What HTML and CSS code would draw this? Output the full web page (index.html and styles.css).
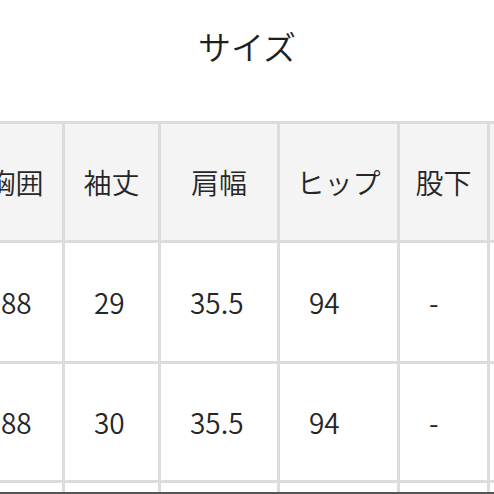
FILE: index.html
```html
<!DOCTYPE html>
<html lang="ja">
<head>
<meta charset="utf-8">
<link rel="stylesheet" href="styles.css">
</head>
<body>
<div class="page">
  <h2 class="title">サイズ</h2>
  <div class="table-wrap">
    <table class="size-table">
      <colgroup>
        <col class="c1"><col class="c2"><col class="c3"><col class="c4"><col class="c5"><col class="c6">
      </colgroup>
      <thead>
        <tr class="head-row">
          <th>胸囲</th><th>袖丈</th><th>肩幅</th><th>ヒップ</th><th>股下</th><th></th>
        </tr>
      </thead>
      <tbody>
        <tr class="row-a"><td class="first">88</td><td>29</td><td>35.5</td><td>94</td><td>-</td><td></td></tr>
        <tr class="row-b"><td class="first">88</td><td>30</td><td>35.5</td><td>94</td><td>-</td><td></td></tr>
        <tr class="row-c"><td class="first">88</td><td>31</td><td>35.5</td><td>94</td><td>-</td><td></td></tr>
      </tbody>
    </table>
  </div>
  <div class="edge"></div>
</div>
</body>
</html>
```
FILE: styles.css
```css
html, body {
  margin: 0;
  padding: 0;
  background: #ffffff;
}
.page {
  width: 494px;
  height: 494px;
  overflow: hidden;
  position: relative;
  font-family: "Noto Sans CJK JP", "Noto Sans", sans-serif;
  color: #333333;
}
.title {
  margin: 0;
  height: 121px;
  box-sizing: border-box;
  padding-top: 30px;
  font-size: 33px;
  line-height: 32px;
  font-weight: 350;
  text-align: center;
  color: #1e1e1e;
}
.table-wrap {
  margin-left: -34px;
}
.size-table {
  border-collapse: collapse;
  table-layout: fixed;
  width: 621px;
  font-size: 28px;
}
.c1 { width: 96px; }
.c2 { width: 96px; }
.c3 { width: 119px; }
.c4 { width: 120px; }
.c5 { width: 90px; }
.c6 { width: 100px; }
.size-table th,
.size-table td {
  border: 3px solid #dcdcdc;
  padding: 0;
  font-weight: 350;
  white-space: nowrap;
}
.size-table th {
  background: #f4f4f4;
  text-align: center;
  height: 116px;
  color: #262626;
}
.size-table td {
  text-align: left;
  padding-left: 29px;
  background: #ffffff;
  color: #262626;
}
.size-table td.first {
  padding-left: 32px;
}
.row-a td { height: 118px; }
.row-b td { height: 116px; }
.row-c td { height: 116px; }
.edge {
  position: absolute;
  left: 0;
  bottom: 0;
  width: 494px;
  height: 2px;
  background: #555555;
}
```
